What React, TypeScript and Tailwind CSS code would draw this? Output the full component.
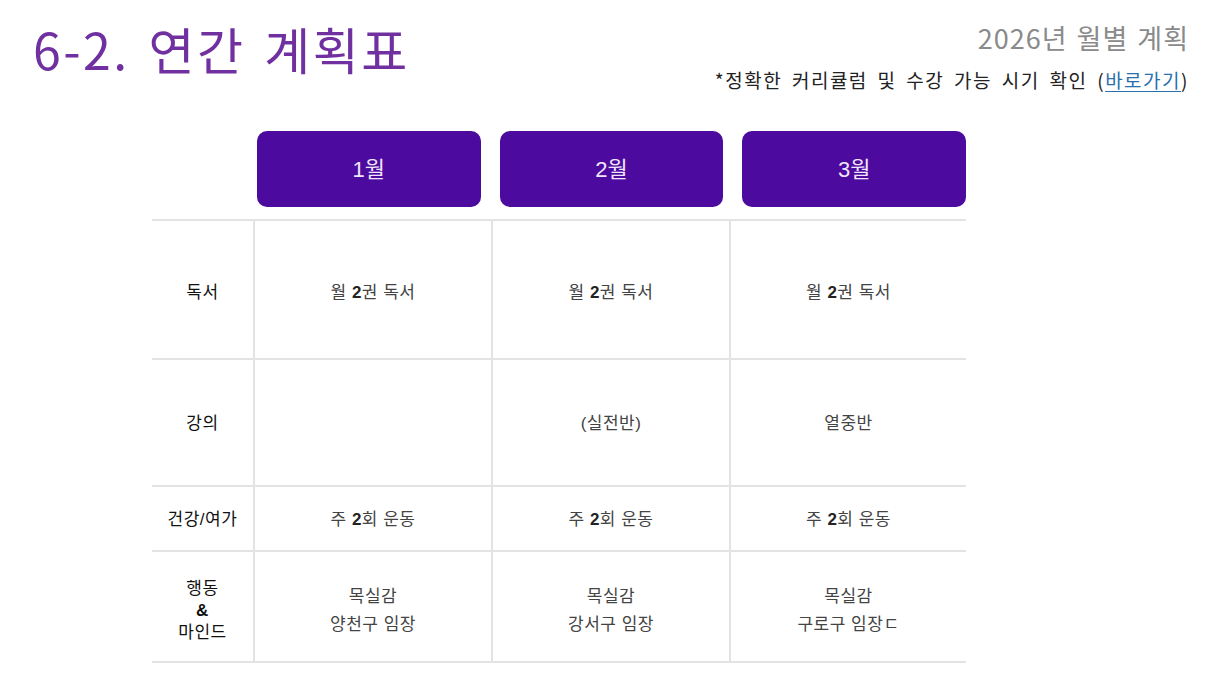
import React from "react";

const months = ["1월", "2월", "3월"];

const B = ({ children }: { children: React.ReactNode }) => (
  <span className="font-bold text-[#222]">{children}</span>
);

const rows: { label: React.ReactNode; h: string; pad: string; cells: React.ReactNode[] }[] = [
  {
    label: "독서",
    h: "h-[139px]",
    pad: "pt-[7px]",
    cells: [
      <>월 <B>2</B>권 독서</>,
      <>월 <B>2</B>권 독서</>,
      <>월 <B>2</B>권 독서</>,
    ],
  },
  {
    label: "강의",
    h: "h-[127px]",
    pad: "pt-[2px]",
    cells: [<></>, <>(실전반)</>, <>열중반</>],
  },
  {
    label: "건강/여가",
    h: "h-[65px]",
    pad: "pt-[3px]",
    cells: [
      <>주 <B>2</B>회 운동</>,
      <>주 <B>2</B>회 운동</>,
      <>주 <B>2</B>회 운동</>,
    ],
  },
  {
    label: (
      <>
        행동
        <br />
        <span className="font-bold">&amp;</span>
        <br />
        마인드
      </>
    ),
    h: "h-[111px]",
    pad: "pt-[8px]",
    cells: [
      <>목실감<br />양천구 임장</>,
      <>목실감<br />강서구 임장</>,
      <>목실감<br />구로구 임장ㄷ</>,
    ],
  },
];

export default function App() {
  return (
    <div
      className="w-[1216px] h-[684px] bg-white overflow-hidden relative"
      style={{ fontFamily: '"Noto Sans CJK KR", "Noto Sans", sans-serif' }}
    >
      <div className="flex justify-between items-start">
        <h1 className="ml-[33px] mt-[13px] text-[50px] leading-[70px] text-[#7030a0] font-normal tracking-[2.5px] [word-spacing:5px]">
          6-2. 연간 계획표
        </h1>
        <div className="mr-[27px] mt-[18px] flex flex-col items-end">
          <div className="text-[27px] leading-[40px] text-[#8a8a8a] tracking-[1px] [word-spacing:2px]">
            2026년 월별 계획
          </div>
          <div className="text-[19px] leading-[26px] text-[#222] mt-[9px] tracking-[1.5px] [word-spacing:4px]">
            *정확한 커리큘럼 및 수강 가능 시기 확인 (
            <span className="text-[#2a6fb0] underline underline-offset-[3px]">바로가기</span>)
          </div>
        </div>
      </div>

      <div
        className="ml-[152px] mt-[38px] w-[814px]"
        style={{ fontFamily: '"Liberation Sans", "Noto Sans CJK KR", sans-serif' }}
      >
        <div className="flex gap-[19px] pl-[105px] h-[76px]">
          {months.map((m) => (
            <div
              key={m}
              className="flex-1 rounded-[10px] bg-[#4d0a9e] flex items-center justify-center text-[22px] text-[#efe6fb]"
            >
              {m}
            </div>
          ))}
        </div>
        <div className="mt-[12px] border-t-2 border-[#e3e3e3]">
          {rows.map((r, i) => (
            <div
              key={i}
              className={`grid grid-cols-[101px_238px_238px_237px] border-b-2 border-[#e3e3e3] ${r.h}`}
            >
              <div className={`flex items-center justify-center text-center text-[17px] leading-[22px] text-[#111] tracking-[0.5px] ${r.pad}`}>
                <div>{r.label}</div>
              </div>
              {r.cells.map((c, j) => (
                <div
                  key={j}
                  className={`border-l-2 border-[#e3e3e3] flex items-center justify-center text-center text-[17px] leading-[28px] text-[#444] tracking-[0.5px] ${r.pad}`}
                >
                  <div>{c}</div>
                </div>
              ))}
            </div>
          ))}
        </div>
      </div>
    </div>
  );
}
